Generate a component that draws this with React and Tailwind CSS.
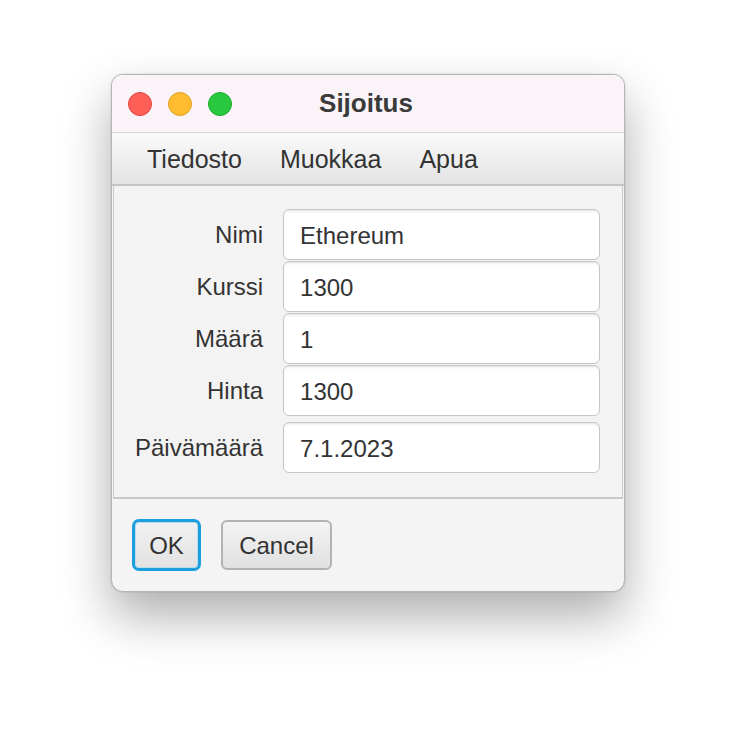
const fields = [
  { label: 'Nimi', value: 'Ethereum' },
  { label: 'Kurssi', value: '1300' },
  { label: 'Määrä', value: '1' },
  { label: 'Hinta', value: '1300' },
];

function Field({ label, value, className = '' }) {
  return (
    <>
      <div className={`flex items-center justify-end pr-[20px] ${className}`}>
        <span>{label}</span>
      </div>
      <div className={`flex h-[51px] items-center rounded-[6px] border border-[#c6c6c6] bg-white pl-4 pt-[2px] shadow-[inset_0_3px_3px_-2px_rgba(0,0,0,0.12)] ${className}`}>
        {value}
      </div>
    </>
  );
}

export default function App() {
  return (
    <div className="min-h-[740px] bg-white pt-[74px] font-['Liberation_Sans',Arial,sans-serif] text-[24px] text-[#333333]">
      <div className="mx-auto flex h-[518px] w-[514px] flex-col overflow-hidden rounded-[12px] border border-[#b5b5b5] bg-[#f4f4f4] shadow-[0_24px_50px_rgba(0,0,0,0.32),0_0_2px_rgba(0,0,0,0.2)]">
        {/* Title bar */}
        <div className="relative flex h-[58px] shrink-0 items-center justify-center border-b border-[#d6d6d6] bg-[#faf4f8]">
          <div className="absolute left-[16px] top-[17px] flex gap-4">
            <span className="h-6 w-6 rounded-full border border-[#e0443e] bg-[#fe5f57]" />
            <span className="h-6 w-6 rounded-full border border-[#dea123] bg-[#febc2e]" />
            <span className="h-6 w-6 rounded-full border border-[#1aab29] bg-[#28c840]" />
          </div>
          <span className="mr-[4px] text-[26px] font-bold text-[#3a3a3a]">Sijoitus</span>
        </div>

        {/* Menu bar */}
        <div className="flex h-[53px] shrink-0 items-center border-b-2 border-[#c4c4c4] bg-gradient-to-b from-[#fafafa] to-[#e4e4e4] pl-[16px] text-[25px]">
          {['Tiedosto', 'Muokkaa', 'Apua'].map((m) => (
            <span key={m} className="px-[19px] pt-[3px]">{m}</span>
          ))}
        </div>

        {/* Form panel */}
        <div className="mx-px grid grid-cols-[auto_1fr] gap-y-[1px] border-x border-b-2 border-[#c9c9c9] bg-[#f3f3f3] pb-[24px] pl-[21px] pr-[22px] pt-[23px]">
          {fields.map((f) => (
            <Field key={f.label} {...f} />
          ))}
          <Field label="Päivämäärä" value="7.1.2023" className="mt-[5px]" />
        </div>

        {/* Buttons */}
        <div className="flex flex-1 items-start gap-5 pl-[20px] pt-[20px]">
          <button className="flex h-[52px] w-[69px] items-center justify-center rounded-[7px] border-[3px] border-[#1b9fde] bg-gradient-to-b from-[#f2f2f2] to-[#e2e2e2] pt-[2px] shadow-[inset_0_0_0_1px_#b9dcef]">
            OK
          </button>
          <button className="mt-px flex h-[50px] w-[111px] items-center justify-center rounded-[6px] border-2 border-[#b3b3b3] bg-gradient-to-b from-[#f4f4f4] to-[#e0e0e0] pt-[2px]">
            Cancel
          </button>
        </div>
      </div>
    </div>
  );
}
